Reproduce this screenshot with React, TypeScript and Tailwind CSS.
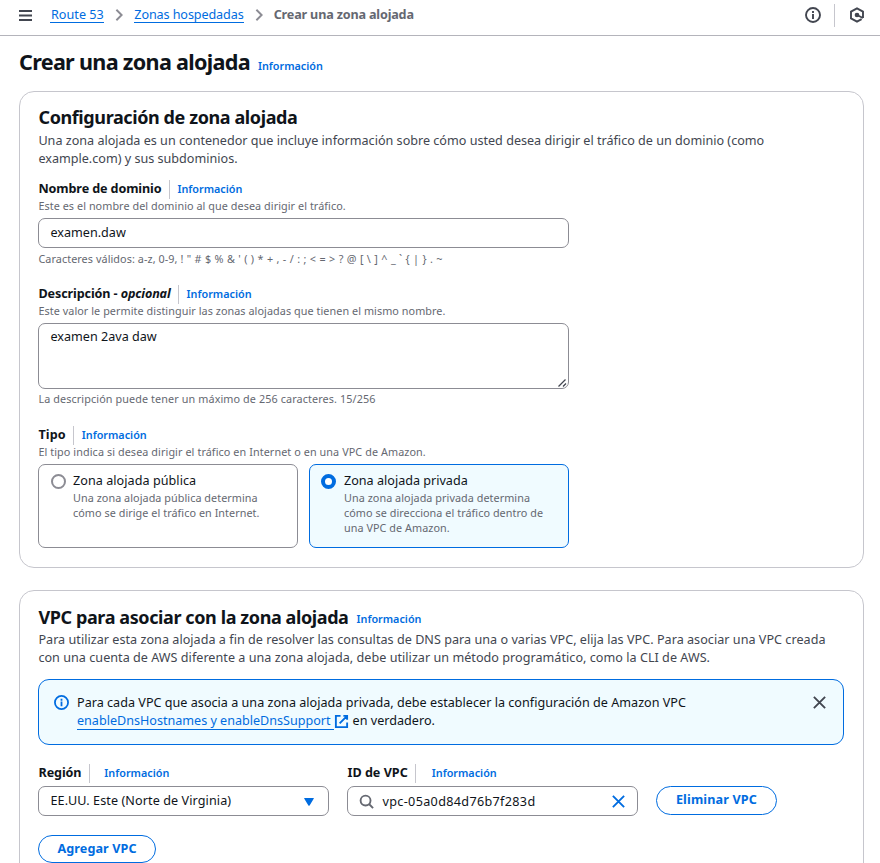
import React from "react";

const INFO = "text-[10.8px] font-semibold text-[#006ce0]";

function InfoLink({ className = "" }: { className?: string }) {
  return <a className={`${INFO} leading-[18px] whitespace-nowrap ${className}`}>Información</a>;
}

function InfoIcon({ className }: { className: string }) {
  return (
    <svg viewBox="0 0 16 16" className={className} fill="none" stroke="currentColor" strokeWidth="1.9">
      <circle cx="8" cy="8" r="7" />
      <path d="M8 7v5M8 4v2" />
    </svg>
  );
}

function Chevron() {
  return (
    <svg viewBox="0 0 16 16" className="h-[14px] w-[14px] text-[#8c8c94]" fill="none" stroke="currentColor" strokeWidth="2.2">
      <path d="m5 2 6 6-6 6" />
    </svg>
  );
}

function CloseIcon({ className }: { className: string }) {
  return (
    <svg viewBox="0 0 16 16" className={className} fill="none" stroke="currentColor" strokeWidth="2">
      <path d="m2 2 12 12M14 2 2 14" />
    </svg>
  );
}

function Label({ children, gap = "ml-[7.5px]", tracking = "tracking-[-0.12px]" }: { children: React.ReactNode; gap?: string; tracking?: string }) {
  return (
    <div className="flex h-[18px] items-center pl-[0.5px] whitespace-nowrap">
      <span className={`text-[12.6px] leading-[18px] font-bold ${tracking}`}>{children}</span>
      <span className="ml-[7.5px] h-[19px] w-px bg-[#c6c6cd]" />
      <InfoLink className={gap} />
    </div>
  );
}

const HINT = "text-[10.8px] leading-[15px] text-[#656871] whitespace-nowrap";
const BODY = "text-[12.6px] leading-[18px] whitespace-nowrap";

export default function App() {
  return (
    <div className="h-[863px] w-[880px] overflow-hidden bg-white font-['Noto_Sans',sans-serif] text-[#0f141a]">
      <header className="flex h-9 items-start border-b border-[#b4b4bb] pl-[19px]">
        <svg viewBox="0 0 14 14" className="mt-2 h-[14px] w-[14px] text-[#424650]" stroke="currentColor" strokeWidth="1.8">
          <path d="M0 3h13M0 7.5h13M0 12h13" />
        </svg>
        <nav className={`mt-[5px] ml-[17px] flex items-center ${BODY}`}>
          <a className="h-[18px] border-b border-[#006ce0] pl-px leading-[20px] tracking-[0.03px] text-[#006ce0]">Route 53</a>
          <span className="mr-2 ml-[8.5px] pt-px"><Chevron /></span>
          <a className="h-[18px] border-b border-[#006ce0] leading-[20px] tracking-[-0.1px] text-[#006ce0]">Zonas hospedadas</a>
          <span className="mx-2 pt-px"><Chevron /></span>
          <span className="h-[18px] leading-[20px] font-bold tracking-[-0.16px] text-[#656871]">Crear una zona alojada</span>
        </nav>
        <div className="ml-auto flex items-center pr-[15px]">
          <InfoIcon className="mt-[3px] h-4 w-4 text-[#424650]" />
          <span className="mt-1 ml-[13px] h-[23px] w-px bg-[#c6c6cd]" />
          <svg viewBox="0 0 16 16" className="mt-[3px] ml-[14px] h-4 w-4 text-[#424650]" fill="none" stroke="currentColor" strokeWidth="1.9">
            <path d="M14 11V4.6L8 1.3 2 4.6v6.8l6 3.3 4.6-2.5M8 8l6 3" />
            <circle cx="8" cy="8" r="1.4" fill="currentColor" />
          </svg>
        </div>
      </header>

      <div className="flex h-[55px] items-baseline pt-[12px] pl-[19px] whitespace-nowrap">
        <h1 className="text-[21.6px] leading-[28px] font-bold tracking-[-0.7px]">Crear una zona alojada</h1>
        <InfoLink className="ml-2" />
      </div>

      <section className="ml-[19px] h-[477px] w-[845px] rounded-[15px] border border-[#c6c6cd] pt-[15px] pl-[18px]">
        <h2 className="-mt-px pl-[0.5px] text-[18px] leading-[22px] font-bold tracking-[-0.4px] whitespace-nowrap">Configuración de zona alojada</h2>
        <p className={`mt-1 pl-[0.4px] text-[#424650] ${BODY}`}>
          Una zona alojada es un contenedor que incluye información sobre cómo usted desea dirigir el tráfico de un dominio (como
          <br />
          example.com) y sus subdominios.
        </p>

        <div className="mt-3">
          <Label>Nombre de dominio</Label>
          <p className={`pl-[0.4px] tracking-[0.07px] ${HINT}`}>Este es el nombre del dominio al que desea dirigir el tráfico.</p>
          <div className={`mt-[5px] flex h-[30px] w-[531px] items-center rounded-[7px] border border-[#8c8c94] pl-[11.5px] ${BODY}`}>examen.daw</div>
          <p className={`mt-[3px] pl-[0.4px] ${HINT}`}><span className="tracking-[0.08px]">Caracteres válidos: a-z, 0-9, </span><span className="tracking-[0.31px]">{"! \" # $ % & ' ( ) * + , - / : ; < = > ? @ [ \\ ] ^ _ ` { | } . ~"}</span></p>
        </div>

        <div className="mt-[19px]">
          <Label>Descripción - <i>opcional</i></Label>
          <p className={`pl-[0.4px] tracking-[0.07px] ${HINT}`}>Este valor le permite distinguir las zonas alojadas que tienen el mismo nombre.</p>
          <div className={`mt-[5px] flex h-[66px] w-[531px] justify-between rounded-[7px] border border-[#8c8c94] pt-1 pl-[11.5px] ${BODY}`}>
            <span>examen 2ava daw</span>
            <svg viewBox="0 0 10 10" className="h-[10px] w-[10px] self-end text-[#424650]" stroke="currentColor" strokeWidth="1.3">
              <path d="M.5 8.5 7.5 1.5M5 8.5l3-3" />
            </svg>
          </div>
          <p className={`mt-[2px] pl-[0.4px] tracking-[0.11px] ${HINT}`}>La descripción puede tener un máximo de 256 caracteres. 15/256</p>
        </div>

        <div className="mt-5">
          <Label tracking="tracking-[0.1px]">Tipo</Label>
          <p className={`pl-[0.4px] tracking-[0.09px] ${HINT}`}>El tipo indica si desea dirigir el tráfico en Internet o en una VPC de Amazon.</p>
          <div className="mt-[5px] flex gap-[11px]">
            <div className="flex h-[84px] w-[260px] rounded-[7px] border border-[#8c8c94] pt-[7px] pl-3">
              <span className="mt-[2px] h-[15px] w-[15px] rounded-full border-2 border-[#8c8c94]" />
              <div className="ml-[7px]">
                <div className={`tracking-[0.05px] ${BODY}`}>Zona alojada pública</div>
                <p className={`tracking-[0.06px] ${HINT}`}>Una zona alojada pública determina<br />cómo se dirige el tráfico en Internet.</p>
              </div>
            </div>
            <div className="flex h-[84px] w-[260px] rounded-[7px] border border-[#006ce0] bg-[#f0fbff] pt-[7px] pl-[11px]">
              <span className="mt-[2px] h-[15px] w-[15px] rounded-full border-[4.5px] border-[#006ce0] bg-white" />
              <div className="ml-2">
                <div className={BODY}>Zona alojada privada</div>
                <p className={`tracking-[0.06px] ${HINT}`}>Una zona alojada privada determina<br />cómo se direcciona el tráfico dentro de<br />una VPC de Amazon.</p>
              </div>
            </div>
          </div>
        </div>
      </section>

      <section className="mt-[22px] ml-[19px] h-[300px] w-[845px] rounded-t-[15px] border border-[#c6c6cd] pt-[15px] pl-[18px]">
        <div className="flex h-[22px] items-baseline whitespace-nowrap">
          <h2 className="pl-[0.5px] text-[18px] leading-[22px] font-bold tracking-[-0.4px]">VPC para asociar con la zona alojada</h2>
          <InfoLink className="relative -top-px ml-2" />
        </div>
        <p className={`mt-[3px] pl-[0.4px] tracking-[0.03px] text-[#424650] ${BODY}`}>
          Para utilizar esta zona alojada a fin de resolver las consultas de DNS para una o varias VPC, elija las VPC. Para asociar una VPC creada
          <br />
          con una cuenta de AWS diferente a una zona alojada, debe utilizar un método programático, como la CLI de AWS.
        </p>

        <div className="mt-3 flex h-[66px] w-[806px] rounded-[11px] border border-[#006ce0] bg-[#f0fbff] pt-[14px] pr-[16px] pl-[15px]">
          <InfoIcon className="mt-px h-[15px] w-[15px] text-[#006ce0]" />
          <div className={`ml-2 tracking-[0.015px] ${BODY}`}>
            Para cada VPC que asocia a una zona alojada privada, debe establecer la configuración de Amazon VPC
            <div className="flex h-[18px]">
              <a className="border-b border-[#006ce0] pr-[3.5px] tracking-[-0.01px] text-[#006ce0]">enableDnsHostnames y enableDnsSupport</a>
              <svg viewBox="0 0 16 16" className="mt-[2px] mr-[3.5px] h-[15px] w-[15px] text-[#006ce0]" fill="none" stroke="currentColor" strokeWidth="2">
                <path d="M10 2h4v4M6 10l8-8M14 9v5H2V2h5" />
              </svg>
              <span>en verdadero.</span>
            </div>
          </div>
          <CloseIcon className="mt-px ml-auto h-[15px] w-[15px] text-[#424650]" />
        </div>

        <div className="mt-[19px] flex">
          <div>
            <Label gap="ml-[14.5px]">Región</Label>
            <div className={`mt-1 flex h-[30px] w-[291px] items-center justify-between rounded-[7px] border border-[#8c8c94] pr-[14.5px] pl-[11.5px] tracking-[0.09px] ${BODY}`}>
              <span>EE.UU. Este (Norte de Virginia)</span>
              <svg viewBox="0 0 10 8" className="mt-px h-2 w-[10px] fill-[#006ce0]">
                <path d="M.6 0h8.8q.8 0 .3.7L5.6 7.4q-.6.8-1.2 0L.3.7Q-.2 0 .6 0Z" />
              </svg>
            </div>
          </div>
          <div className="ml-[18px]">
            <Label gap="ml-[15.5px]" tracking="tracking-[0px]">ID de VPC</Label>
            <div className={`mt-1 flex h-[30px] w-[291px] items-center rounded-[7px] border border-[#8c8c94] pr-[11px] pl-[11px] ${BODY}`}>
              <svg viewBox="0 0 16 16" className="h-[15px] w-[15px] text-[#656871]" fill="none" stroke="currentColor" strokeWidth="2">
                <circle cx="7" cy="7" r="5.3" />
                <path d="m10.7 10.7 4.3 4.3" />
              </svg>
              <span className="mt-[2px] ml-[8.5px] tracking-[0.34px]">vpc-05a0d84d76b7f283d</span>
              <CloseIcon className="ml-auto h-[15px] w-[15px] text-[#006ce0]" />
            </div>
          </div>
          <button className="mt-[22px] ml-[18px] flex h-[29px] w-[121px] items-center justify-center rounded-full border border-[#006ce0] pb-[1.5px] text-[12.6px] leading-[18px] font-bold tracking-[0.15px] whitespace-nowrap text-[#006ce0]">Eliminar VPC</button>
        </div>
        <button className="mt-[19px] flex h-[28px] w-[118px] items-center justify-center rounded-full border border-[#006ce0] text-[12.6px] leading-[18px] font-bold tracking-[0.1px] whitespace-nowrap text-[#006ce0]">Agregar VPC</button>
      </section>
    </div>
  );
}
